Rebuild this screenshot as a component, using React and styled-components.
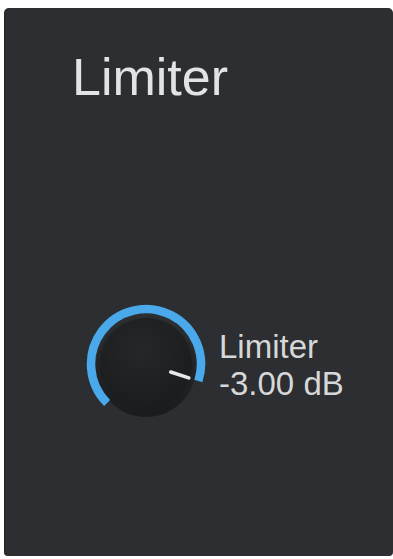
import React from 'react';
import styled, { createGlobalStyle } from 'styled-components';

const GlobalStyle = createGlobalStyle`
  html, body {
    margin: 0;
    padding: 0;
    background: #ffffff;
  }
  body {
    font-family: "Liberation Sans", Arial, sans-serif;
  }
`;

const Panel = styled.section`
  box-sizing: border-box;
  margin: 8px 0 0 4px;
  width: 389px;
  height: 548px;
  padding: 43px 0 0 68px;
  background: #2c2e31;
  border-radius: 5px 5px 4px 4px;
  box-shadow: inset 1px 0 0 rgba(0, 0, 0, 0.25);
`;

const Title = styled.h1`
  margin: 0;
  font-size: 52px;
  line-height: 52px;
  font-weight: 400;
  color: #e2e3e4;
`;

const KnobRow = styled.div`
  display: flex;
  align-items: center;
  gap: 11px;
  margin: 199px 0 0 12px;
`;

const Readout = styled.div`
  display: flex;
  flex-direction: column;
  font-size: 33px;
  line-height: 37px;
  color: #d6d7d8;
  margin-top: 2px;
`;

// angle measured clockwise from 12 o'clock, in degrees
const polar = (cx, cy, r, deg) => {
  const a = (deg * Math.PI) / 180;
  return [cx + r * Math.sin(a), cy - r * Math.cos(a)];
};

const Knob = ({ value = 0.9, size = 124 }) => {
  const c = size / 2;
  const start = -135;
  const end = start + 270 * value;
  const [sx, sy] = polar(c, c, 55, start);
  const [ex, ey] = polar(c, c, 55, end);
  const [ix1, iy1] = polar(c, c, 26, end);
  const [ix2, iy2] = polar(c, c, 45, end);
  const large = end - start > 180 ? 1 : 0;

  return (
    <svg width={size} height={size} viewBox={`0 0 ${size} ${size}`}>
      <defs>
        <radialGradient id="knobBody" cx="45%" cy="35%" r="70%">
          <stop offset="0%" stopColor="#262729" />
          <stop offset="100%" stopColor="#1a1b1c" />
        </radialGradient>
        <linearGradient id="knobShade" x1="0" y1="0" x2="0" y2="1">
          <stop offset="0%" stopColor="#2a2c2f" />
          <stop offset="100%" stopColor="#18191b" />
        </linearGradient>
      </defs>
      <circle cx={c} cy={c + 3} r={50} fill="url(#knobShade)" opacity="0.9" />
      <path
        d={`M ${sx} ${sy} A 55 55 0 ${large} 1 ${ex} ${ey}`}
        fill="none"
        stroke="#4aa9ea"
        strokeWidth="8.5"
        strokeLinecap="butt"
      />
      <circle cx={c} cy={c} r={46} fill="url(#knobBody)" />
      <line
        x1={ix1}
        y1={iy1}
        x2={ix2}
        y2={iy2}
        stroke="#e8e8e8"
        strokeWidth="3.5"
        strokeLinecap="round"
      />
    </svg>
  );
};

const App = () => (
  <>
    <GlobalStyle />
    <Panel>
      <Title>Limiter</Title>
      <KnobRow>
        <Knob value={0.9} />
        <Readout>
          <span>Limiter</span>
          <span>-3.00 dB</span>
        </Readout>
      </KnobRow>
    </Panel>
  </>
);

export default App;
